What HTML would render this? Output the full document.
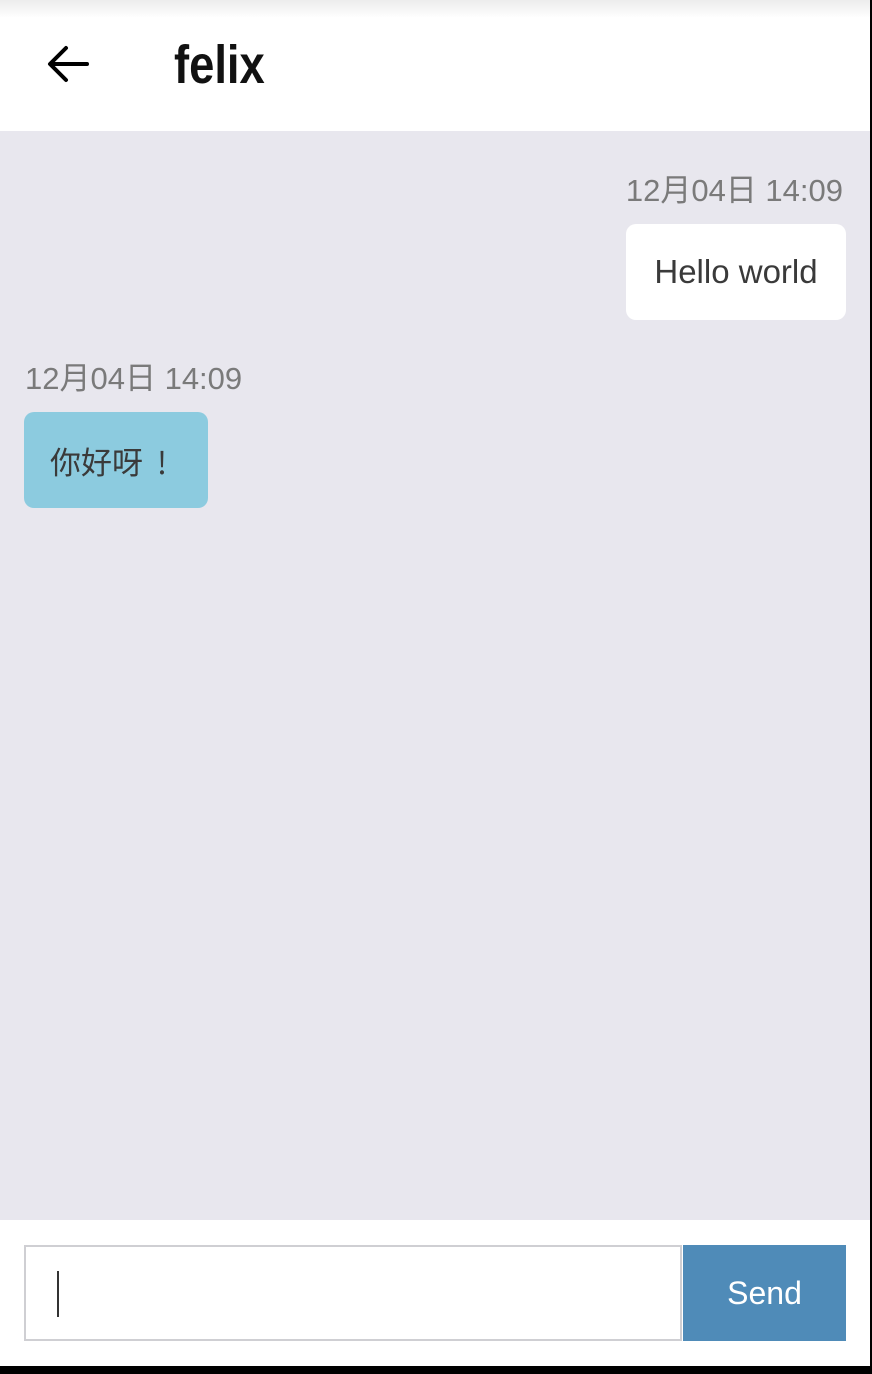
<!DOCTYPE html>
<html><head><meta charset="utf-8"><style>
html,body{margin:0;padding:0;}
body{width:872px;height:1374px;background:#000;position:relative;overflow:hidden;font-family:"Liberation Sans","Noto Sans CJK SC",sans-serif;}
.page{position:absolute;left:0;top:0;width:870px;height:1366px;background:#e8e7ee;}
.header{position:absolute;left:0;top:0;width:870px;height:131px;background:#fff;}
.shadow{position:absolute;left:0;top:0;width:870px;height:18px;background:linear-gradient(#ececec,#fff);}
.title{position:absolute;left:174px;top:34px;font-size:54px;font-weight:bold;color:#111;transform:scaleX(0.84);transform-origin:left top;line-height:62px;}
.ts{position:absolute;font-size:31px;color:#7a7a7a;line-height:36px;}
.bubble{position:absolute;border-radius:10px;font-size:33px;color:#3a3a3a;display:flex;align-items:center;justify-content:center;}
.footer{position:absolute;left:0;top:1220px;width:870px;height:146px;background:#fff;}
.input{position:absolute;left:24px;top:1245px;width:654px;height:92px;border:2px solid #cfcfd3;background:#fff;}
.caret{position:absolute;left:31px;top:24px;width:2px;height:46px;background:#333;}
.send{position:absolute;left:683px;top:1245px;width:163px;height:96px;background:#4f8bb8;color:#fff;font-size:32px;display:flex;align-items:center;justify-content:center;}
</style></head><body>
<div class="page">
<div class="header"><div class="shadow"></div>
<svg style="position:absolute;left:46px;top:44px" width="44" height="42" viewBox="0 0 44 42"><path d="M41 20H6M20 4L4 20L20 36" fill="none" stroke="#000" stroke-width="4" stroke-linecap="round" stroke-linejoin="round"/></svg>
<div class="title">felix</div>
</div>
<div class="ts" style="right:27px;top:173px;">12月04日 14:09</div>
<div class="bubble" style="left:626px;top:224px;width:220px;height:96px;background:#fff;">Hello world</div>
<div class="ts" style="left:25px;top:361px;">12月04日 14:09</div>
<div class="bubble" style="left:24px;top:412px;width:158px;height:96px;padding-left:26px;justify-content:flex-start;background:#8ccbdf;font-family:'Noto Sans CJK SC',sans-serif;font-size:31px;">你好呀<span style="margin-left:14px">!</span></div>
<div class="footer"></div>
<div class="input"><div class="caret"></div></div>
<div class="send">Send</div>
</div>
</body></html>
